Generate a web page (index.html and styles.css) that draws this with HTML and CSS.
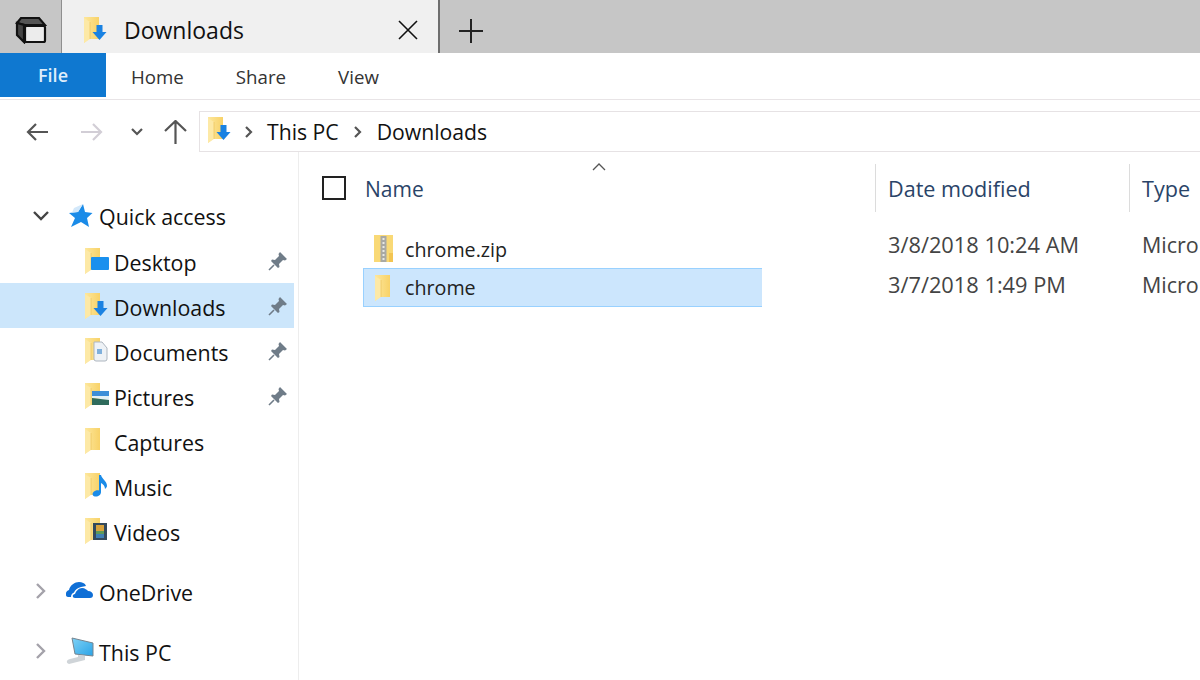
FILE: index.html
```html
<!DOCTYPE html>
<html>
<head>
  <title>Downloads</title>
  <link rel="stylesheet" href="styles.css">
</head>
<body>

  <svg class="defs" width="0" height="0">
    <defs>
      <linearGradient id="folderBack" x1="0" y1="0" x2="1" y2="0">
        <stop offset="0" stop-color="#fde79c"/>
        <stop offset="1" stop-color="#f8d268"/>
      </linearGradient>
      <linearGradient id="screen" x1="0" y1="0" x2="1" y2="1">
        <stop offset="0" stop-color="#7fd2f6"/>
        <stop offset="1" stop-color="#2ba3e6"/>
      </linearGradient>
      <symbol id="folder" viewBox="0 0 24 26">
        <path d="M1 0 H16 V22 H6 L1 26 Z" fill="url(#folderBack)"/>
        <path d="M1 1 L7 5 V22 L1 26 Z" fill="#fde9a6"/>
        <path d="M7 5 V22" stroke="#efc65f" stroke-width=".8"/>
      </symbol>
      <symbol id="arrow" viewBox="0 0 24 26">
        <path d="M13.500 8 H19.500 V15 H23.500 L16.500 23 L9.500 15 H13.500 Z" fill="#1a82e2"/>
      </symbol>
      <symbol id="pin" viewBox="0 0 20 20">
        <path d="M12 1 L19 8 L17 9.500 L15 9 L11 13 L11.500 16 L10 17 L3 10 L4 8.500 L7 9 L11 5 L10.500 3 Z" fill="#6f7c88"/>
        <path d="M6 14 L1 19" stroke="#6f7c88" stroke-width="1.6"/>
      </symbol>
    </defs>
  </svg>

  <div class="tabbar">
    <div class="tabs-btn">
      <svg width="32" height="28" viewBox="0 0 32 28" fill="none" stroke="#111" stroke-width="2.2">
        <path d="M2 7 L6 2 H24 L30 9 H10 Z" fill="#555"/>
        <path d="M2 7 V19 L9 26 V9 Z" fill="#444"/>
        <rect x="10" y="10" width="20" height="16" rx="1.500" fill="#ececec"/>
      </svg>
    </div>
    <div class="tab">
      <svg class="tab-icon" width="24" height="26"><use href="#folder"/><use href="#arrow"/></svg>
      <span class="tab-title">Downloads</span>
      <svg class="tab-close" width="20" height="20" viewBox="0 0 20 20" stroke="#111" stroke-width="1.6">
        <path d="M1 1 L19 19 M19 1 L1 19"/>
      </svg>
    </div>
    <div class="new-tab">
      <svg width="26" height="26" viewBox="0 0 26 26" stroke="#222" stroke-width="2">
        <path d="M13 1 V25 M1 13 H25"/>
      </svg>
    </div>
  </div>

  <div class="ribbon">
    <div class="file-tab">File</div>
    <div class="ribbon-item home">Home</div>
    <div class="ribbon-item share">Share</div>
    <div class="ribbon-item view">View</div>
  </div>

  <div class="navrow">
    <svg class="nav-back" width="22" height="18" viewBox="0 0 22 18" fill="none" stroke="#555" stroke-width="2.2">
      <path d="M10 1 L2 9 L10 17 M2 9 H22"/>
    </svg>
    <svg class="nav-forward" width="22" height="18" viewBox="0 0 22 18" fill="none" stroke="#d2ced6" stroke-width="2.2">
      <path d="M12 1 L20 9 L12 17 M20 9 H0"/>
    </svg>
    <svg class="nav-down" width="12" height="8" viewBox="0 0 12 8" fill="none" stroke="#555" stroke-width="2.2">
      <path d="M1 1 L6 6 L11 1"/>
    </svg>
    <svg class="nav-up" width="23" height="24" viewBox="0 0 23 24" fill="none" stroke="#555" stroke-width="2.2">
      <path d="M1 11 L11.500 1 L22 11 M11.500 1 V24"/>
    </svg>
    <div class="address">
      <svg class="addr-icon" width="24" height="26"><use href="#folder"/><use href="#arrow"/></svg>
      <svg class="addr-sep first" width="8" height="12" viewBox="0 0 8 12" fill="none" stroke="#555" stroke-width="2.2"><path d="M1 1 L6 6 L1 11"/></svg>
      <span>This PC</span>
      <svg class="addr-sep" width="8" height="12" viewBox="0 0 8 12" fill="none" stroke="#555" stroke-width="2.2"><path d="M1 1 L6 6 L1 11"/></svg>
      <span>Downloads</span>
    </div>
  </div>

  <div class="main">
    <div class="sidebar">
      <div class="side-row top">
        <svg class="twist" width="16" height="10" viewBox="0 0 16 10" fill="none" stroke="#444" stroke-width="2.4"><path d="M1 1 L8 8 L15 1"/></svg>
        <svg class="top-icon" width="24" height="24" viewBox="0 0 24 24">
          <path d="M14 0 L16 8 L23.500 9 L18 14 L20 23 L12 18 L2 23 L6 14 L0 9 L9 8 Z" fill="#1a8be8"/>
          <path d="M14 0 L9 8 L3 8.500 L5 4 Z" fill="#d3e8fa"/>
        </svg>
        <span>Quick access</span>
      </div>
      <div class="side-row item">
        <svg class="item-icon" width="26" height="26"><use href="#folder" width="24" height="26"/><rect x="7" y="9" width="18" height="13" rx="1" fill="#1a90ee"/></svg>
        <span>Desktop</span>
        <svg class="pin" width="20" height="20"><use href="#pin"/></svg>
      </div>
      <div class="side-row item selected">
        <svg class="item-icon" width="26" height="26"><use href="#folder" width="24" height="26"/><use href="#arrow" width="24" height="26"/></svg>
        <span>Downloads</span>
        <svg class="pin" width="20" height="20"><use href="#pin"/></svg>
      </div>
      <div class="side-row item">
        <svg class="item-icon" width="26" height="26"><use href="#folder" width="24" height="26"/><path d="M10 4 H18 L23 10 V21 Q23 23 21 23 H12 Q10 23 10 21 Z" fill="#eef2f6" stroke="#aeb6bf"/><rect x="13" y="11" width="5" height="5" fill="#7fb0dc"/></svg>
        <span>Documents</span>
        <svg class="pin" width="20" height="20"><use href="#pin"/></svg>
      </div>
      <div class="side-row item">
        <svg class="item-icon" width="26" height="26"><use href="#folder" width="24" height="26"/><rect x="8" y="8" width="17" height="5" fill="#3d8ed8"/><path d="M8 13 H25 V17 L8 15 Z" fill="#e4f0f5"/><path d="M8 15 L25 17 V22 H8 Z" fill="#2f6b5c"/></svg>
        <span>Pictures</span>
        <svg class="pin" width="20" height="20"><use href="#pin"/></svg>
      </div>
      <div class="side-row item">
        <svg class="item-icon" width="26" height="26"><use href="#folder" width="24" height="26"/></svg>
        <span>Captures</span>
      </div>
      <div class="side-row item">
        <svg class="item-icon" width="26" height="26"><use href="#folder" width="24" height="26"/><path d="M15 2 H17 C18 6 23 8 23 13 C23 14 22 15 21 16 C21 13 19 11 17 10 V19 C17 22 14 24 11 23.500 C8 23 8 20 10 18.500 C12 17 14 17 15 17.500 Z" fill="#1a8be8"/></svg>
        <span>Music</span>
      </div>
      <div class="side-row item">
        <svg class="item-icon" width="26" height="26"><use href="#folder" width="24" height="26"/><rect x="9" y="5" width="14" height="17" fill="#33495c"/><rect x="12" y="7" width="8" height="6" fill="#d9a23c"/><rect x="12" y="13" width="8" height="3" fill="#5d9a58"/><rect x="12" y="16" width="8" height="4" fill="#3f7fb5"/></svg>
        <span>Videos</span>
      </div>
      <div class="side-row top group">
        <svg class="twist closed" width="10" height="16" viewBox="0 0 10 16" fill="none" stroke="#a4a2aa" stroke-width="2.4"><path d="M1 1 L8 8 L1 15"/></svg>
        <svg class="top-icon" width="28" height="18" viewBox="0 0 28 18">
          <path d="M2 15 C-1 15 -1 9 3 8 C4 3 9 0 13 0 C16 0 19 1 20 4 L15 5 C11 6 9 8 8 10.500 C6 11 5 13 5 15 Z" fill="#0f6fd6"/>
          <path d="M9 16 C6 16 6 12 9 12 C10 9 13 6 16 6 C19 6 21 8 22 9 C25 9 27 11 27 13 C27 15 26 16 24 16 Z" fill="#0f6fd6"/>
        </svg>
        <span>OneDrive</span>
      </div>
      <div class="side-row top group">
        <svg class="twist closed" width="10" height="16" viewBox="0 0 10 16" fill="none" stroke="#a4a2aa" stroke-width="2.4"><path d="M1 1 L8 8 L1 15"/></svg>
        <svg class="top-icon" width="28" height="28" viewBox="0 0 28 28">
          <path d="M12 18 L19 19 V23 L3 27 C0 26 0 23 4 22 L12 20 Z" fill="#cfd4d8"/>
          <path d="M6 1 L27 6 V19 L9 17 Z" fill="url(#screen)" stroke="#76848f"/>
        </svg>
        <span>This PC</span>
      </div>
    </div>

    <div class="content">
      <div class="list-head">
        <div class="col-name">
          <div class="checkbox"></div>
          <span class="name-label">Name</span>
          <svg class="sort" width="14" height="8" viewBox="0 0 14 8" fill="none" stroke="#555" stroke-width="1.3"><path d="M1 7 L7 1 L13 7"/></svg>
        </div>
        <div class="col-date">Date modified</div>
        <div class="col-type">Type</div>
      </div>
      <div class="list-body">
        <div class="names">
          <div class="file-row">
            <svg class="file-icon" width="24" height="28" viewBox="0 0 24 28">
              <path d="M0 0 H19 V27 H0 Z" fill="#f9d976"/>
              <path d="M15 18 H19 V27 H15 Z" fill="#f3c552"/>
              <path d="M6.500 1 H12.500 V27 H6.500 Z" fill="#a9a9a4"/>
              <path d="M9.500 3 V25" stroke="#e8e8e4" stroke-width="2" stroke-dasharray="2 2"/>
            </svg>
            <span class="zip-name">chrome.zip</span>
          </div>
          <div class="file-row selected">
            <svg class="file-icon" width="24" height="26"><use href="#folder"/></svg>
            <span>chrome</span>
          </div>
        </div>
        <div class="dates">
          <div>3/8/2018 10:24 AM</div>
          <div>3/7/2018 1:49 PM</div>
        </div>
        <div class="types">
          <div>Micro</div>
          <div>Micro</div>
        </div>
      </div>
    </div>
  </div>

</body>
</html>
```

FILE: styles.css
```css
* {
  box-sizing: border-box;
}

html, body {
  height: 100%;
}

body {
  margin: 0;
  width: 1200px;
  height: 680px;
  overflow: hidden;
  background: #fff;
  color: #111;
  font-family: "Open Sans", "Noto Sans", sans-serif;
  font-size: 21.4px;
}

svg {
  flex: none;
  display: block;
}

.defs {
  position: absolute;
}

/* title strip */
.tabbar {
  display: flex;
  height: 53px;
  background: #c6c6c6;
}

.tabs-btn {
  width: 62px;
  padding: 16px 0 0 15px;
  border-right: 1px solid #8f8f8f;
}

.tab {
  display: flex;
  align-items: center;
  width: 378px;
  padding: 7px 0 0 21px;
  background: #f0f0f0;
  border-right: 2px solid #6e6e6e;
}

.tab-title {
  margin-left: 17px;
  color: #111;
  font-size: 23px;
}

.tab-close {
  margin-left: 154px;
}

.new-tab {
  padding: 18px 0 0 18px;
}

/* ribbon */
.ribbon {
  display: flex;
  height: 47px;
  border-bottom: 1px solid #e8e4e6;
  font-size: 18.700px;
  color: #333;
}

.file-tab {
  width: 106px;
  height: 44px;
  padding-top: 10px;
  background: #0f78d0;
  color: #dfeefb;
  font-size: 18px;
  font-weight: 600;
  text-align: center;
}

.ribbon-item {
  padding-top: 11px;
}

.home {
  margin-left: 25px;
}

.share {
  margin-left: 52px;
}

.view {
  margin-left: 52px;
}

/* back, forward, up, path */
.navrow {
  display: flex;
  align-items: center;
  height: 52px;
  padding: 11px 0 0 26px;
}

.nav-forward {
  margin-left: 33px;
}

.nav-down {
  margin-left: 28px;
}

.nav-up {
  margin-left: 21px;
}

.address {
  display: flex;
  align-items: center;
  flex: 1;
  height: 41px;
  margin-left: 12px;
  padding-left: 7px;
  border: 1px solid #e6e2e4;
  border-right: none;
  font-size: 21.200px;
}

.addr-icon {
  margin-top: -3px;
}

.addr-sep {
  margin: 0 15px;
}

.addr-sep.first {
  margin: 0 14px;
}

/* left tree */
.main {
  display: flex;
  height: 528px;
}

.sidebar {
  width: 299px;
  padding: 41px 4px 0 0;
  border-right: 1px solid #ededed;
}

.side-row {
  display: flex;
  align-items: center;
  height: 45px;
}

.side-row span {
  padding-top: 2px;
}

.side-row.top {
  padding-left: 33px;
}

.side-row.group {
  margin-top: 15px;
  padding-left: 36px;
}

.side-row.group span {
  padding-top: 4px;
}

.twist {
  width: 16px;
}

.twist.closed {
  width: 10px;
}

.top-icon {
  margin-left: 20px;
  margin-right: 6px;
}

.group .top-icon {
  margin-left: 20px;
  margin-right: 5px;
}

.side-row.item {
  padding-left: 84px;
}

.side-row.item span {
  padding-top: 4px;
}

.item-icon {
  margin-right: 4px;
}

.pin {
  margin-left: auto;
  margin-right: 6px;
}

.side-row.selected {
  background: #cce6fb;
}

/* file list */
.content {
  flex: 1;
  overflow: hidden;
}

.list-head {
  display: flex;
  height: 48px;
  margin-top: 12px;
  color: #2a4468;
  font-size: 21px;
}

.col-name {
  position: relative;
  display: flex;
  align-items: center;
  width: 576px;
  padding-left: 23px;
}

.checkbox {
  width: 24px;
  height: 24px;
  margin-right: 19px;
  border: 2px solid #222;
}

.name-label {
  padding-top: 2px;
}

.sort {
  position: absolute;
  left: 293px;
  top: -1px;
}

.col-date {
  width: 254px;
  padding: 10px 0 0 12px;
  border-left: 1px solid #dcdcdc;
  font-size: 21.600px;
}

.col-type {
  flex: 1;
  padding: 10px 0 0 12px;
  border-left: 1px solid #dcdcdc;
  font-size: 21.600px;
}

.list-body {
  display: flex;
  padding-top: 8px;
}

.names {
  width: 576px;
  padding: 9px 0 0 64px;
  font-size: 19.700px;
  color: #222;
}

.file-row {
  display: flex;
  align-items: center;
  width: 399px;
  height: 39px;
  padding-left: 10px;
  border: 1px solid transparent;
}

.file-row.selected {
  background: #cce6fd;
  border-color: #99d1ff;
  border-right: none;
}

.file-icon {
  margin-right: 7px;
}

.zip-name {
  padding-top: 2px;
}

.dates {
  width: 254px;
  padding: 5px 0 0 13px;
  color: #444;
  font-size: 21.800px;
}

.types {
  padding: 5px 0 0 13px;
  color: #444;
  font-size: 21.500px;
}

.dates div, .types div {
  height: 40px;
  line-height: 40px;
  white-space: nowrap;
}
```
